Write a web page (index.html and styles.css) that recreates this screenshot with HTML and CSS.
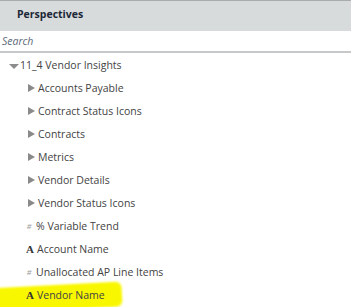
FILE: index.html
```
<!DOCTYPE html>
<html lang="en">
<head>
    <meta charset="UTF-8">
    <meta name="viewport" content="width=device-width, initial-scale=1.0">
    <title>Perspectives</title>
    <link rel="stylesheet" href="styles.css">
</head>
<body>
    <div class="panel">
        <div class="panel-header">Perspectives</div>
        <div class="search-wrap">
            <input type="text" class="search" placeholder="Search">
        </div>

        <ul class="tree">
            <li class="node open">
                <div class="row">
                    <span class="caret-down"></span>
                    <span class="label">11_4 Vendor Insights</span>
                </div>
                <ul class="children">
                    <li class="row"><span class="icon folder"></span><span class="label">Accounts Payable</span></li>
                    <li class="row"><span class="icon folder"></span><span class="label">Contract Status Icons</span></li>
                    <li class="row"><span class="icon folder"></span><span class="label">Contracts</span></li>
                    <li class="row"><span class="icon folder"></span><span class="label">Metrics</span></li>
                    <li class="row"><span class="icon folder"></span><span class="label">Vendor Details</span></li>
                    <li class="row"><span class="icon folder"></span><span class="label">Vendor Status Icons</span></li>
                    <li class="row"><span class="icon num">#</span><span class="label">% Variable Trend</span></li>
                    <li class="row"><span class="icon attr">A</span><span class="label">Account Name</span></li>
                    <li class="row"><span class="icon num">#</span><span class="label">Unallocated AP Line Items</span></li>
                    <li class="row marked"><span class="icon attr">A</span><span class="label">Vendor Name</span></li>
                </ul>
            </li>
        </ul>
    </div>
</body>
</html>
```

FILE: styles.css
```
body{
    margin:0;
    background:#fff;
    font-family:"Open Sans", "Liberation Sans", sans-serif;
    font-size:10.5px;
    color:#434343;
}

.panel{
    width:351px;
    height:307px;
    overflow:hidden;
}

.panel-header{
    height:30px;
    line-height:27px;
    border-top:1px solid #a9abac;
    background:#d7dbdc;
    padding-left:17px;
    font-weight:bold;
    font-size:10.5px;
    color:#1c2737;
}

.search-wrap{
    height:20px;
    border-bottom:2px solid #c6c8c9;
}

.search{
    width:100%;
    height:20px;
    box-sizing:border-box;
    border:none;
    outline:none;
    padding:0 2px;
    font-family:inherit;
    font-size:10.5px;
    font-style:italic;
    background:#fff;
}

.search::placeholder{
    color:#5b6a7a;
}

.tree, .children{
    list-style:none;
    margin:0;
    padding:0;
}

.row{
    height:23px;
    display:flex;
    align-items:center;
}

.node > .row{
    padding-left:9px;
}

.caret-down{
    width:0;
    height:0;
    border-left:5px solid transparent;
    border-right:5px solid transparent;
    border-top:5px solid #8c8c8c;
    margin-top:3px;
    margin-right:1px;
}

.children .row{
    padding-left:24px;
}

.icon{
    width:14px;
    display:flex;
    justify-content:center;
}

.folder::before{
    content:"";
    width:0;
    height:0;
    border-top:4.5px solid transparent;
    border-bottom:4.5px solid transparent;
    border-left:7px solid #8a8a8a;
    margin-left:1px;
}

.num{
    font-size:8px;
    font-style:italic;
    color:#a0a0a0;
    margin-left:-2px;
}

.attr{
    font-family:"Liberation Serif", serif;
    font-weight:bold;
    font-size:11px;
    color:#333;
    margin-left:-1px;
}

.label{
    white-space:nowrap;
}

.marked{
    position:relative;
}

.marked::before{
    content:"";
    position:absolute;
    left:-12px;
    top:2px;
    width:134px;
    height:25px;
    background:#f9f700;
    transform:rotate(-3deg);
    border-radius:6px;
    filter:blur(1px);
    z-index:-1;
}
```
